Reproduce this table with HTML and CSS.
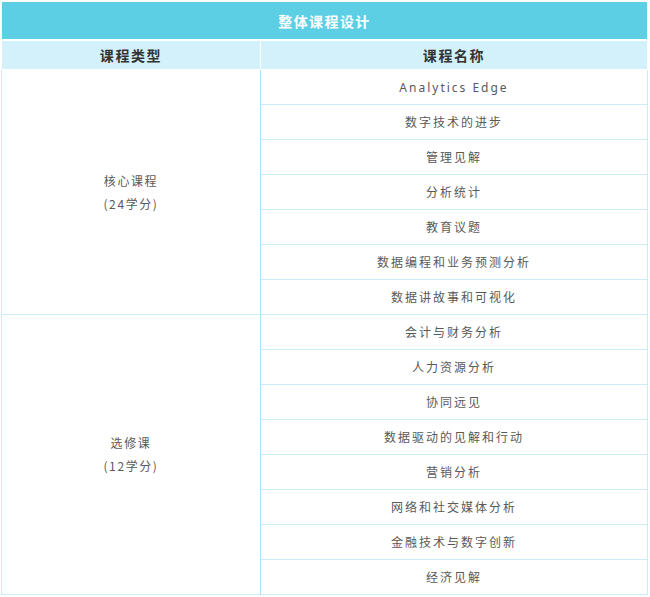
FILE: index.html
```html
<!DOCTYPE html>
<html lang="zh">
<head>
<meta charset="utf-8">
<title>整体课程设计</title>
<link rel="stylesheet" href="styles.css">
</head>
<body>
<div class="sheet">
  <div class="title">整体课程设计</div>
  <div class="head">
    <div class="hcell">课程类型</div>
    <div class="hcell">课程名称</div>
  </div>
  <div class="grid">
    <div class="type type-core"><span>核心课程</span><span>(24学分)</span></div>
    <div class="type type-elective"><span>选修课</span><span>(12学分)</span></div>
    <div class="course">Analytics Edge</div>
    <div class="course">数字技术的进步</div>
    <div class="course">管理见解</div>
    <div class="course">分析统计</div>
    <div class="course">教育议题</div>
    <div class="course">数据编程和业务预测分析</div>
    <div class="course">数据讲故事和可视化</div>
    <div class="course">会计与财务分析</div>
    <div class="course">人力资源分析</div>
    <div class="course">协同远见</div>
    <div class="course">数据驱动的见解和行动</div>
    <div class="course">营销分析</div>
    <div class="course">网络和社交媒体分析</div>
    <div class="course">金融技术与数字创新</div>
    <div class="course">经济见解</div>
  </div>
</div>
</body>
</html>
```

FILE: styles.css
```css
html, body {
  margin: 0;
  padding: 0;
  background: #ffffff;
}
body {
  font-family: "Noto Sans", "Noto Sans CJK SC", sans-serif;
}
.sheet {
  width: 647px;
  margin: 2px 0 0 1px;
}
.title {
  height: 37px;
  margin: 0 1px;
  background: #5dcfe5;
  color: #ffffff;
  font-family: "Noto Sans CJK SC", sans-serif;
  font-weight: 700;
  font-size: 14px;
  letter-spacing: 1.4px;
  display: flex;
  align-items: center;
  justify-content: center;
}
.head {
  margin: 2px 1px 1px 1px;
  display: grid;
  grid-template-columns: 258px 386px;
  column-gap: 1px;
}
.hcell {
  height: 28px;
  background: #d2f1fb;
  color: #333333;
  font-family: "Noto Sans CJK SC", sans-serif;
  font-weight: 700;
  font-size: 14px;
  letter-spacing: 1.6px;
  display: flex;
  align-items: center;
  justify-content: center;
}
.grid {
  display: grid;
  grid-template-columns: 259px 386px;
  grid-auto-rows: 35px;
  border-left: 1px solid #c9eef7;
  border-right: 1px solid #c9eef7;
}
.type {
  grid-column: 1;
  box-sizing: border-box;
  border-right: 1px solid #a9e3f4;
  border-bottom: 1px solid #c9eef7;
  display: flex;
  flex-direction: column;
  align-items: center;
  justify-content: center;
  gap: 5px;
  color: #595959;
  font-family: "Noto Sans CJK SC", sans-serif;
  font-size: 12px;
  letter-spacing: 1.6px;
  line-height: 18px;
}
.type-core {
  grid-row: 1 / span 7;
}
.type-elective {
  grid-row: 8 / span 8;
}
.course {
  grid-column: 2;
  box-sizing: border-box;
  border-bottom: 1px solid #c9eef7;
  display: flex;
  align-items: center;
  justify-content: center;
  color: #595959;
  font-family: "Noto Sans", "Noto Sans CJK SC", sans-serif;
  font-size: 12px;
  letter-spacing: 2px;
}
```
